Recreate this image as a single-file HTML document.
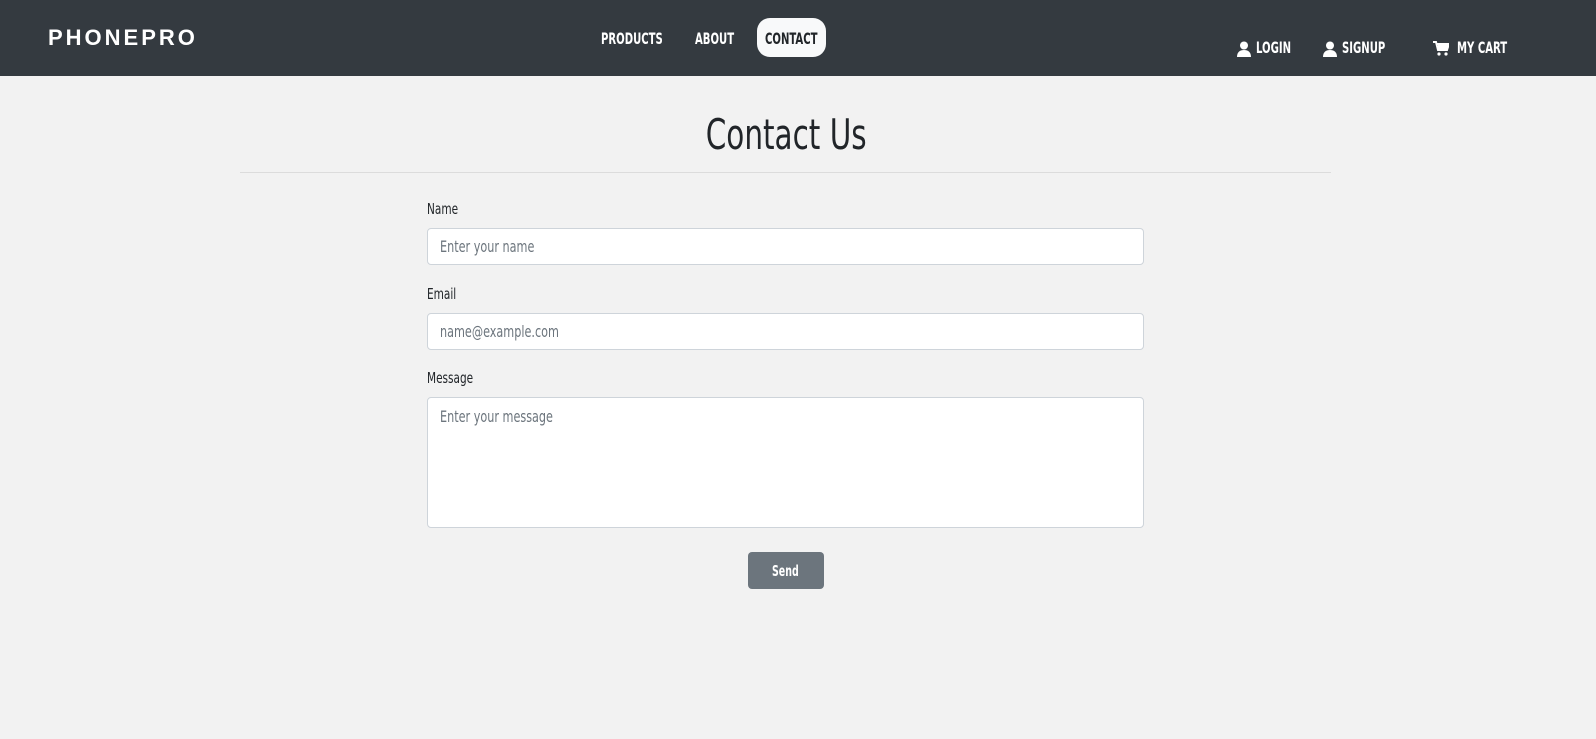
<!DOCTYPE html>
<html><head><style>
body{margin:0;width:1596px;height:739px;background:#f2f2f2;font-family:"DejaVu Sans Condensed","Liberation Sans",sans-serif;position:relative;overflow:hidden}
.a{position:absolute;white-space:nowrap}
.c{display:inline-block;transform:scaleX(.78);transform-origin:left center}
.b{display:inline-block;transform:scaleX(.7);transform-origin:left center;font-weight:bold}
nav{position:absolute;left:0;top:0;width:1596px;height:76px;background:#343a40}
.n{color:#fff;font-size:16px;top:29px}
.in{position:absolute;left:427px;width:715px;background:#fff;border:1px solid #ced4da;border-radius:4px}
.ph{color:#6c757d;font-size:16px}
.lb{color:#212529;font-size:15px}
</style></head><body>
<nav></nav>
<div class="a" style="left:48px;top:25px;color:#fff;font:bold 22px 'Liberation Sans',sans-serif;letter-spacing:3px">PHONEPRO</div>
<div class="a n" style="left:601px"><span class="b">PRODUCTS</span></div>
<div class="a n" style="left:695px"><span class="b">ABOUT</span></div>
<div class="a" style="left:757px;top:18px;width:69px;height:39px;background:#f8f9fa;border-radius:13px"></div>
<div class="a n" style="left:765px;color:#212529"><span class="b">CONTACT</span></div>
<svg class="a" style="left:1237px;top:41px" width="14" height="16" viewBox="0 0 14 16"><circle cx="7" cy="4.5" r="4" fill="#fff"/><path d="M0 16c0-5 3-7 7-7s7 2 7 7z" fill="#fff"/></svg>
<div class="a n" style="left:1256px;top:38px"><span class="b">LOGIN</span></div>
<svg class="a" style="left:1323px;top:41px" width="14" height="16" viewBox="0 0 14 16"><circle cx="7" cy="4.5" r="4" fill="#fff"/><path d="M0 16c0-5 3-7 7-7s7 2 7 7z" fill="#fff"/></svg>
<div class="a n" style="left:1342px;top:38px"><span class="b">SIGNUP</span></div>
<svg class="a" style="left:1433px;top:41px" width="16" height="15" viewBox="0 0 16 15"><path d="M0 1h3l2 8h9l2-6H4" fill="none" stroke="#fff" stroke-width="2"/><rect x="5" y="3" width="10" height="6" fill="#fff"/><circle cx="6" cy="13" r="1.6" fill="#fff"/><circle cx="13" cy="13" r="1.6" fill="#fff"/></svg>
<div class="a n" style="left:1457px;top:38px"><span class="b">MY CART</span></div>
<div class="a" style="left:0;width:1572px;text-align:center;top:110px;font-size:42px;color:#212529"><span class="c" style="transform-origin:center">Contact Us</span></div>
<div class="a" style="left:240px;top:172px;width:1091px;height:1px;background:#dcdcdc"></div>
<div class="a lb" style="left:427px;top:200px"><span class="c">Name</span></div>
<div class="in" style="top:228px;height:35px"></div>
<div class="a ph" style="left:440px;top:237px"><span class="c">Enter your name</span></div>
<div class="a lb" style="left:427px;top:285px"><span class="c">Email</span></div>
<div class="in" style="top:313px;height:35px"></div>
<div class="a ph" style="left:440px;top:322px"><span class="c">name@example.com</span></div>
<div class="a lb" style="left:427px;top:369px"><span class="c">Message</span></div>
<div class="in" style="top:397px;height:129px"></div>
<div class="a ph" style="left:440px;top:407px"><span class="c">Enter your message</span></div>
<div class="a" style="left:748px;top:552px;width:76px;height:37px;background:#6c757d;border-radius:4px"></div>
<div class="a" style="left:772px;top:562px;color:#fff;font-size:15px"><span class="b">Send</span></div>
</body></html>
